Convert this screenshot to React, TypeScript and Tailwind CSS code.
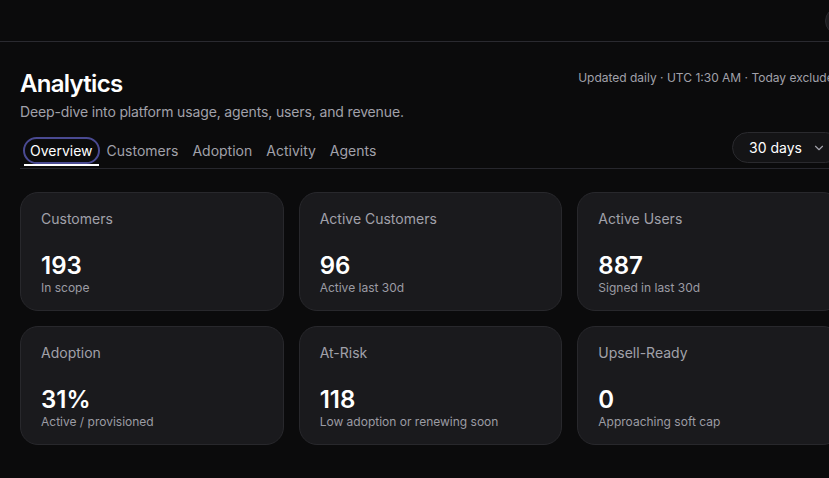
import { ChevronDown } from 'lucide-react'

const tabs = ['Overview', 'Customers', 'Adoption', 'Activity', 'Agents']

const stats = [
  { label: 'Customers', value: '193', sub: 'In scope' },
  { label: 'Active Customers', value: '96', sub: 'Active last 30d' },
  { label: 'Active Users', value: '887', sub: 'Signed in last 30d' },
  { label: 'Adoption', value: '31%', sub: 'Active / provisioned' },
  { label: 'At-Risk', value: '118', sub: 'Low adoption or renewing soon' },
  { label: 'Upsell-Ready', value: '0', sub: 'Approaching soft cap' },
]

function StatCard({ label, value, sub }: { label: string; value: string; sub: string }) {
  return (
    <div className="h-[119px] rounded-[18px] border border-[#28282c] bg-[#1a1a1d] px-5 pt-4">
      <div className="text-sm leading-5 text-[#a1a1aa]">{label}</div>
      <div className="mt-[23px] text-2xl leading-7 font-semibold text-white">{value}</div>
      <div className="text-xs leading-4 text-[#9c9ca4]">{sub}</div>
    </div>
  )
}

export default function App() {
  return (
    <div className="h-screen w-screen overflow-hidden bg-[#0b0b0c] font-['Inter',sans-serif]">
      <div className="w-[861px]">
        <header className="flex h-[42px] items-center justify-end border-b border-[#2a2a30] pr-2">
          <div className="h-7 w-7 rounded-full border border-[#2a2a2e] bg-[#1c1c1f]" />
        </header>

        <main className="px-5 pt-[26px]">
          <div className="flex items-start justify-between">
            <div>
              <h1 className="text-2xl leading-8 font-semibold tracking-[-0.03em] text-white">Analytics</h1>
              <p className="mt-0.5 text-sm leading-5 tracking-[-0.01em] text-[#a1a1aa]">
                Deep-dive into platform usage, agents, users, and revenue.
              </p>
            </div>
            <div className="mt-[2px] text-xs leading-4 text-[#a1a1aa]">
              Updated daily · UTC 1:30 AM · Today excluded
            </div>
          </div>

          <div className="mt-[10px] flex items-end justify-between border-b border-[#27272d]">
            <div className="flex items-end pl-[3px]">
              {tabs.map((t, i) => (
                <div key={t} className="flex flex-col items-stretch pb-[2px]">
                  <button
                    className={
                      i === 0
                        ? 'h-[27px] rounded-full border-2 border-[#4a4a92] px-[5px] text-sm text-white'
                        : 'h-[27px] rounded-full border-2 border-transparent px-[5px] text-sm text-[#a1a1aa]'
                    }
                  >
                    {t}
                  </button>
                  <div className={i === 0 ? 'mx-[1px] h-[2px] bg-white' : 'mx-[1px] h-[2px] bg-transparent'} />
                </div>
              ))}
            </div>
            <button className="mb-[5px] flex h-[31px] items-center gap-[10px] rounded-full border border-[#2a2a2e] bg-[#141416] pl-4 pr-[14px] text-sm text-white">
              30 days
              <ChevronDown size={14} className="text-[#a1a1aa]" />
            </button>
          </div>

          <div className="mt-[23px] grid grid-cols-3 gap-[15px]">
            {stats.map((s) => (
              <StatCard key={s.label} {...s} />
            ))}
          </div>
        </main>
      </div>
    </div>
  )
}
